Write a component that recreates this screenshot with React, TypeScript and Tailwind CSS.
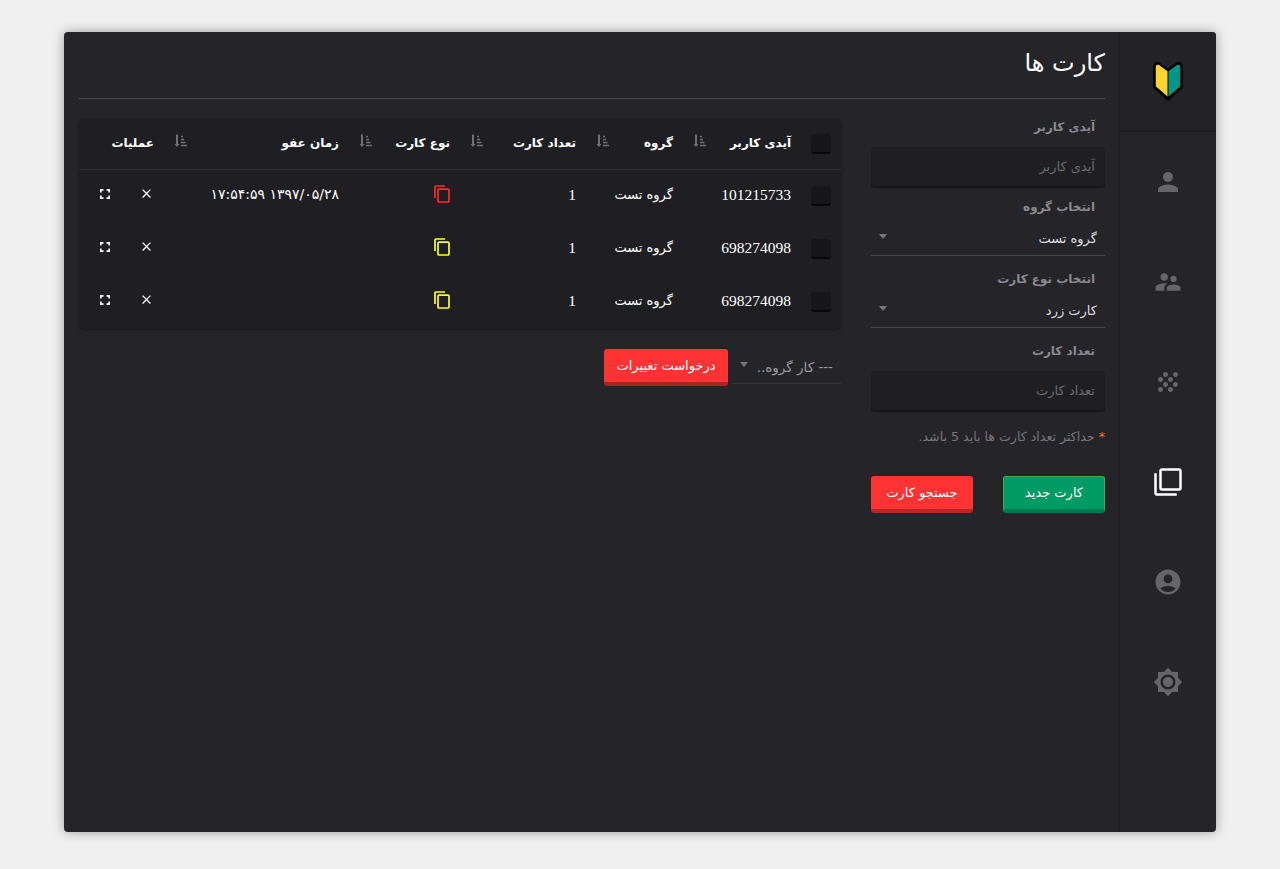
import React from "react";
import { MdPerson, MdSupervisorAccount, MdGrain, MdFilterNone, MdAccountCircle, MdBrightness7, MdClose } from "react-icons/md";

const font = "font-['DejaVu_Sans','Noto_Sans',sans-serif]";

function Sort() {
  return (
    <svg width="13" height="14" viewBox="0 0 13 14" className="text-[#6f6f74]" fill="none" stroke="currentColor">
      <path d="M3 .5v11" strokeWidth="2" />
      <path d="M.5 10 3 13l2.500-3z" fill="currentColor" stroke="none" />
      <path d="M7 2.500h2M7 5.500h3M7 8.500h4.500M7 11.500h6" strokeWidth="1.400" />
    </svg>
  );
}

function Copy({ color }: { color: string }) {
  return (
    <svg width="16" height="18" viewBox="0 0 16 18" fill="none" stroke={color} strokeWidth="1.700">
      <path d="M1 13V1.800C1 1.300 1.300 1 1.800 1H11" />
      <rect x="4" y="4.200" width="11" height="12.800" rx="1" />
    </svg>
  );
}

function Frame() {
  return (
    <svg width="10" height="10" viewBox="0 0 10 10" fill="none" stroke="#fff" strokeWidth="1.700">
      <path d="M.8 3.500V.8h2.700M6.500.8h2.700v2.700M9.200 6.500v2.700H6.500M3.500 9.200H.8V6.500" />
    </svg>
  );
}

function Check() {
  return <div className="w-5 h-5 rounded-[3px] bg-[#17171a] border-b-2 border-[#08080a] mx-auto mb-[1px]" />;
}

function TextField({ label, mt }: { label: string; mt: string }) {
  return (
    <div className={mt}>
      <div className="text-[12px] font-bold text-[#8a8a8e] pr-[10px] h-[18px] leading-[18px]">{label}</div>
      <div className="mt-[11px] h-[41px] rounded-[4px] bg-[#1f1f22] border-b-2 border-[#151517] px-[10px] text-[13px] leading-[39px] text-[#6a6a6f]">
        {label}
      </div>
    </div>
  );
}

function SelectField({ label, value, mt }: { label: string; value: string; mt: string }) {
  return (
    <div className={mt}>
      <div className="text-[12px] font-bold text-[#8a8a8e] pr-[10px] h-[18px] leading-[18px]">{label}</div>
      <div className="mt-[3px] h-[37px] pt-[4px] border-b border-[#45454a] flex items-center justify-between px-[8px] text-[13px] text-[#dcdcde]">
        <span>{value}</span>
        <span className="w-0 h-0 border-x-[4px] border-x-transparent border-t-[5px] border-t-[#77777c] mb-[6px]" />
      </div>
    </div>
  );
}

const headers = [
  { t: "آیدی کاربر", w: "w-[118px]" },
  { t: "گروه", w: "w-[97px]" },
  { t: "تعداد کارت", w: "w-[126px]" },
  { t: "نوع کارت", w: "w-[111px]" },
  { t: "زمان عفو", w: "w-[185px]" },
];

const rows = [
  { id: "101215733", color: "#ff2a2a", time: "۱۳۹۷/۰۵/۲۸ ۱۷:۵۴:۵۹" },
  { id: "698274098", color: "#ffff22", time: "" },
  { id: "698274098", color: "#ffff22", time: "" },
];

const navIcons = [MdPerson, MdSupervisorAccount, MdGrain, MdFilterNone, MdAccountCircle, MdBrightness7];

export default function App() {
  return (
    <div dir="rtl" className={`min-h-[869px] bg-[#f0f0f0] pt-[32px] px-[64px] ${font}`}>
      <div className="h-[800px] w-[1152px] rounded-[4px] bg-[#242429] shadow-[0_0_12px_rgba(0,0,0,0.35)] flex overflow-hidden">
        <aside className="w-[97px] shrink-0 border-l border-[#202024] flex flex-col">
          <div className="h-[100px] border-b-2 border-[#1d1d20] bg-[#232327] flex items-center justify-center">
            <svg width="32" height="43" viewBox="0 0 34 44">
              <path d="M2 6c0-3 3-5 5.500-3.500L17 9.500l9.500-7C29 1 32 3 32 6v22L17 42 2 28z" fill="#000" stroke="#000" strokeWidth="1.500" strokeLinejoin="round" />
              <path d="M4 6.500c0-2 2-3 3.500-2L16.500 11v27L4 27z" fill="#ffd332" />
              <path d="M30 6.500c0-2-2-3-3.500-2L17.500 11v27L30 27z" fill="#00968a" />
            </svg>
          </div>
          {navIcons.map((Icon, i) => (
            <div key={i} className="h-[100px] flex items-center justify-center">
              <Icon size={30} className={i === 3 ? "text-white" : "text-[#66666a]"} />
            </div>
          ))}
        </aside>
        <main className="flex-1 pr-[14px] pl-[15px]">
          <div className="h-[67px] border-b border-[#4a4a4e] pt-[15px] text-[24px] leading-[32px] text-white">کارت ها</div>
          <div className="flex gap-[30px] mt-[21px]">
            <section className="w-[234px] shrink-0 -mt-[2px]">
              <TextField label="آیدی کاربر" mt="" />
              <SelectField label="انتخاب گروه" value="گروه تست" mt="mt-[10px]" />
              <SelectField label="انتخاب نوع کارت" value="کارت زرد" mt="mt-[14px]" />
              <TextField label="تعداد کارت" mt="mt-[14px]" />
              <p className="mt-[16px] text-[12.600px] leading-[18px] text-[#77777c]">
                <span className="text-[#f2701d]">* </span>حداکثر تعداد کارت ها باید 5 باشد.
              </p>
              <div className="flex justify-between mt-[30px]">
                <button className="w-[102px] h-[37px] rounded-[3px] bg-[#009b64] border border-[#3aae50] border-b-[4px] border-b-[#007a4e] text-white text-[13px]">کارت جدید</button>
                <button className="w-[102px] h-[37px] rounded-[3px] bg-[#ff3333] border-b-[4px] border-b-[#bb2525] text-white text-[13px]">جستجو کارت</button>
              </div>
            </section>
            <section className="w-[762px] -mt-[1px]">
              <div className="rounded-[5px] bg-[#1f1f23] shadow-[0_1px_3px_rgba(0,0,0,0.4)] h-[210px]">
                <div className="flex h-[51px] border-b border-[#323236] items-center text-white text-[12px] font-bold">
                  <div className="w-[40px] pt-[1px]"><Check /></div>
                  {headers.map((h) => (
                    <div key={h.t} className={`${h.w} pr-[10px] flex items-center justify-between pl-[10px] h-full`}>
                      <span className="mb-[3px]">{h.t}</span>
                      <span className="mb-[6px]"><Sort /></span>
                    </div>
                  ))}
                  <div className="w-[85px] pr-[10px] mb-[3px]">عملیات</div>
                </div>
                {rows.map((r, i) => (
                  <div key={i} className="flex h-[53px] items-center text-white text-[13px]">
                    <div className="w-[40px]"><Check /></div>
                    <div className="w-[118px] pr-[10px] mb-[4px] font-['Liberation_Serif',serif] text-[15.500px]">{r.id}</div>
                    <div className="w-[97px] pr-[10px] mb-[4px]">گروه تست</div>
                    <div className="w-[126px] pr-[10px] mb-[4px] font-['Liberation_Serif',serif] text-[15.500px]">1</div>
                    <div className="w-[111px] pr-[10px] mb-[5px]"><Copy color={r.color} /></div>
                    <div className="w-[185px] pr-[10px] mb-[4px] text-[14px]">{r.time}</div>
                    <div className="w-[85px] flex items-center pr-[10px] gap-[29px] mb-[6px]">
                      <MdClose size={15} className="text-white" />
                      <Frame />
                    </div>
                  </div>
                ))}
              </div>
              <div className="flex mt-[20px] gap-[4px] items-start">
                <div className="w-[109px] h-[35px] pt-[3px] border-b border-[#37373b] flex items-center justify-between px-[8px] text-[13.500px] text-[#9a9a9e]">
                  <span>--- کار گروه..</span>
                  <span className="w-0 h-0 border-x-[4px] border-x-transparent border-t-[5px] border-t-[#77777c] mb-[6px]" />
                </div>
                <button className="w-[124px] h-[37px] rounded-[3px] bg-[#ff3333] border-b-[4px] border-b-[#a82525] text-white text-[13px]">درخواست تغییرات</button>
              </div>
            </section>
          </div>
        </main>
      </div>
    </div>
  );
}
